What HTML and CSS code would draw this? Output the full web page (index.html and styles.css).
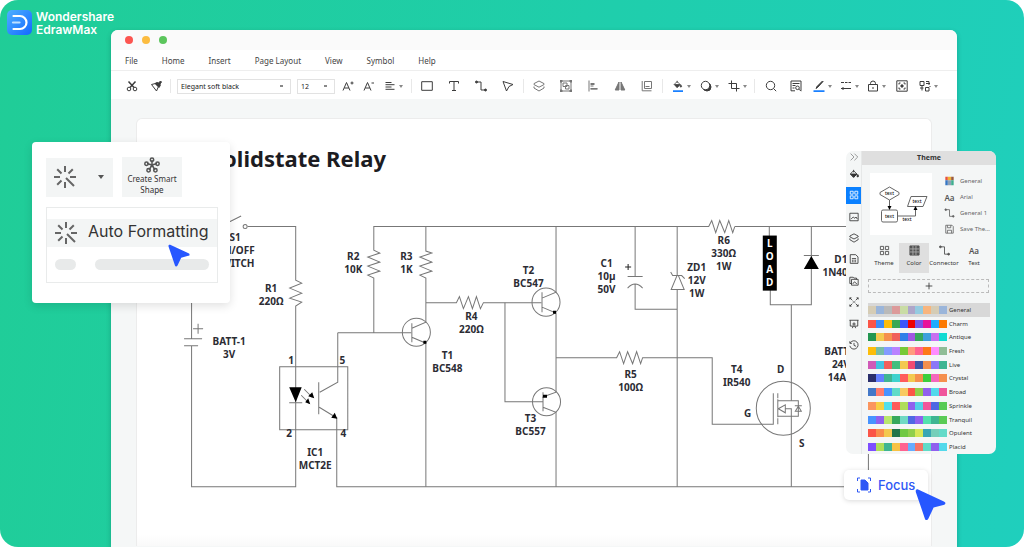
FILE: index.html
```html
<!DOCTYPE html>
<html lang="en">
<head>
<meta charset="utf-8">
<title>Wondershare EdrawMax</title>
<link rel="stylesheet" href="styles.css">
</head>
<body>
<svg class="defs" width="0" height="0" aria-hidden="true">
  <defs>
    <symbol id="burst" viewBox="0 0 24 24"><path d="M12 1v6M12 17v6M1 12h6M17 12h6M4.2 4.2l4.3 4.3M19.8 4.2l-4.3 4.3M4.2 19.8l4.3-4.3M13 13l8 8"/></symbol>
    <symbol id="layers" viewBox="0 0 12 12"><path d="M6 1l5 2.6v1L6 7.200 1 4.600v-1zM1 6.500v1.500l5 3 5-3V6.500"/></symbol>
    <symbol id="grid" viewBox="0 0 12 12"><path d="M1.500 1.500h3.500v3.500h-3.500zM7 1.500h3.500v3.500h-3.500zM1.500 7h3.500v3.500h-3.500zM7 7h3.500v3.500h-3.500z"/></symbol>
    <symbol id="bucket" viewBox="0 0 12 12"><path d="M5.500 1v3M5.500 2L1.500 6l4 4 4-4z"/><path class="solid" d="M2 6h7.500l-4 4zM10.500 6.500c1.500 2 1 3 0 3s-1.500-1 0-3z"/></symbol>
    <symbol id="elbow" viewBox="0 0 12 12"><path d="M2 2h4v8h5"/><circle class="solid" cx="1.500" cy="2" r="1"/><circle class="solid" cx="10.500" cy="10" r="1"/></symbol>
    <symbol id="pointer" viewBox="0 0 30 32"><path d="M3 1.500L28 13c2 1 2 3-.5 3.500L18 19l-5 10.500c-1 2-3 2-3.500 0L.8 4C.3 2 1.300.8 3 1.500z"/></symbol>
  </defs>
</svg>
<main class="hero">
  <div class="brand">
    <svg class="brand-mark" viewBox="0 0 25 25" aria-hidden="true">
      <defs><linearGradient id="mark" x1="0" y1="0" x2="1" y2="1"><stop offset="0" stop-color="#4fb0ff"/><stop offset="1" stop-color="#1268ff"/></linearGradient></defs>
      <rect width="25" height="25" rx="5" fill="url(#mark)"/>
      <path d="M6.500 6h6.500a6.500 6.500 0 0 1 0 13H6.500" fill="none" stroke="#fff" stroke-width="2.200" stroke-linecap="round"/>
      <path d="M6 12.500h6.500" fill="none" stroke="#bfe0ff" stroke-width="2.200" stroke-linecap="round"/>
    </svg>
    <span class="brand-name">Wondershare<br>EdrawMax</span>
  </div>

  <section class="window">
    <div class="titlebar"><i class="dot red"></i><i class="dot amber"></i><i class="dot green"></i></div>
    <nav class="menubar">
      <button>File</button><button>Home</button><button>Insert</button><button>Page Layout</button><button>View</button><button>Symbol</button><button>Help</button>
    </nav>
    <div class="toolbar">
      <div class="tools edit">
        <button aria-label="Cut"><svg viewBox="0 0 12 12"><path stroke-width="1.500" d="M2.500 1.500L8 7.500M9.500 1.500L4 7.500"/><circle cx="3" cy="9" r="1.800"/><circle cx="9" cy="9" r="1.800"/></svg></button>
        <button aria-label="Format painter"><svg viewBox="0 0 12 12"><path d="M1.500 4.500l4-1 3 3-2 4.500z"/><path class="solid" d="M5 3.500l2-1 1.500.5L10.500 1l1 1-1.500 2 .3 1.500L9 7.500z"/></svg></button>
      </div>
      <i class="sep"></i>
      <select class="font" aria-label="Font"><option>Elegant soft black</option></select>
      <select class="size" aria-label="Font size"><option>12</option></select>
      <div class="tools type">
        <button aria-label="Grow font"><svg viewBox="0 0 12 12"><path d="M1 10.500L4.500 2.500 8 10.500M2.300 8h4.500M8.500 3h3M10 1.500v3"/></svg></button>
        <button aria-label="Shrink font"><svg viewBox="0 0 12 12"><path d="M1 10.500L4.500 2.500 8 10.500M2.300 8h4.500M8.500 3h2.500"/></svg></button>
        <button class="drop" aria-label="Align text"><svg viewBox="0 0 12 12"><path d="M1.500 2.500h6M1.500 4.700h9M1.500 7h6M1.500 9.300h9"/></svg></button>
      </div>
      <i class="sep"></i>
      <div class="tools draw">
        <button aria-label="Rectangle"><svg viewBox="0 0 12 12"><path d="M.7 1.700h10.600v8.600H.7z"/></svg></button>
        <button aria-label="Text"><svg viewBox="0 0 12 12"><path d="M1.500 3.500V1.500h9v2M6 1.500v9M4 10.500h4"/></svg></button>
        <button aria-label="Connector"><svg><use href="#elbow"/></svg></button>
        <button aria-label="Select"><svg viewBox="0 0 12 12"><path d="M1 1.500l10 3-4 2-2.500 4.500z"/></svg></button>
      </div>
      <i class="sep"></i>
      <div class="tools draw muted">
        <button aria-label="Layers"><svg><use href="#layers"/></svg></button>
        <button aria-label="Group"><svg viewBox="0 0 12 12"><path d="M1 1h10v10H1zM3 3h4v3.500H3zM5.500 5.500h3.500v3.500H5.500z"/><path class="solid" d="M0 0h2v2H0zM10 0h2v2h-2zM0 10h2v2H0zM10 10h2v2h-2z"/></svg></button>
        <button aria-label="Align"><svg viewBox="0 0 12 12"><path d="M2 .5v11M3.500 3.500h4M3.500 6h3M3.500 8.500h7M3.500 4.500h4M3.500 9.200h7"/></svg></button>
        <button aria-label="Flip"><svg viewBox="0 0 12 12"><path class="solid" d="M5 2v8H1.200zM7 2v8h3.800z"/></svg></button>
        <button aria-label="Arrange"><svg viewBox="0 0 12 12"><path d="M1.200 1v9.800h9.300M3.500 1.500h7v7h-7zM4.500 6.500h4"/></svg></button>
      </div>
      <i class="sep"></i>
      <div class="tools style">
        <button class="drop" aria-label="Fill"><svg viewBox="0 0 12 12"><use href="#bucket" width="11" height="9"/><path class="accent" d="M1 11.300h10"/></svg></button>
        <button class="drop" aria-label="Shadow"><svg viewBox="0 0 12 12"><circle class="solid" cx="7" cy="7" r="4"/><circle class="hollow" cx="5.500" cy="5.500" r="4.200"/></svg></button>
        <button class="drop" aria-label="Crop"><svg viewBox="0 0 12 12"><path d="M3.500.5v8h8M.5 3.500h8v8"/></svg></button>
      </div>
      <i class="sep"></i>
      <div class="tools view">
        <button aria-label="Search"><svg viewBox="0 0 12 12"><circle cx="5.500" cy="5.500" r="4.200"/><path d="M8.500 8.500l2.700 2.700"/></svg></button>
        <button aria-label="Page preview"><svg viewBox="0 0 12 12"><path d="M5 10.800H1V1h10v9.800M2.500 3.500h7M2.500 5.500h3M2.500 8h2"/><circle cx="7.500" cy="7.800" r="1.800"/><path d="M9 9.200l2 2"/></svg></button>
        <button class="drop" aria-label="Line color"><svg viewBox="0 0 12 12"><path class="solid" d="M3 8.500l1-2L9.500 1l.5.500-5 5.500z"/><path class="accent" d="M.5 11.300h11"/></svg></button>
        <button class="drop" aria-label="Line style"><svg viewBox="0 0 12 12"><path d="M1 2.500h3M5 2.500h2.500M8.500 2.500H11M1 8.500h10M3 7v3"/></svg></button>
        <button class="drop" aria-label="Lock"><svg viewBox="0 0 12 12"><path d="M1.500 4.500h9v6.500h-9zM3.500 4.500v-1a2.500 2.500 0 0 1 5 0v1M6 7v2"/></svg></button>
        <button aria-label="Focus mode"><svg viewBox="0 0 12 12"><path d="M.8.8h10.400v10.400H.8zM3 4.500V3h1.500M7.500 3H9v1.500M9 7.500V9H7.500M4.500 9H3V7.500"/><circle class="solid" cx="6" cy="6" r="1.200"/></svg></button>
        <button class="drop" aria-label="More tools"><svg viewBox="0 0 12 12"><path d="M1 1.500h4v4H1zM3 5.500v5M1 8h3.500M7 1.500h3v3.500M7 3.500h4M6.500 7.500h3.500v3.500H6.500zM10.500 6l1 1"/></svg></button>
      </div>
    </div>

    <div class="canvas">
      <article class="sheet">
        <h1>Solidstate Relay</h1>
        <svg class="circuit" viewBox="138 190 793 356" role="img" aria-label="Solid state relay circuit">
          <g class="wire">
            <path d="M220 227l22-11M248.500 226.500H296.500V280l6 3-12 5 12 5-12 5 12 4-6 4V486.500H192.500V345.500M185 345.500h14M185 338.500h18M192.500 338.500V290M194 328.500h10M199 323.500v10"/>
            <circle cx="246" cy="226.500" r="2"/>
            <path d="M280.500 366.500h68v63h-68zM290 402.500h13M305 389l8 8M302 395l8 8M338.500 332.500v49.500l-18 10M319.500 382v32M320 407l18 11M337.500 418v68.500H868.500V226.500H735"/>
            <path d="M338.500 332.500H412M374.500 332.500V278l-6-3 12-4-12-5 12-4-12-5 12-4-6-3V226.500H709l3-6 4 12 4-12 5 12 4-12 4 12 2-6"/>
            <path d="M426.500 226.500V251l6 2-12 4 12 5-12 4 12 5-12 4 6 3V322l-14 6M412.500 337l14 6v143.500M412.500 323v19M426.500 302.500H457l3-6 4 12 5-12 4 12 4-12 4 12 3-6H542"/>
            <circle cx="417" cy="332" r="14"/><circle cx="546.500" cy="302" r="14"/><circle cx="547" cy="401.500" r="14"/>
            <path d="M556.500 226.500V292l-14 6M542.500 307l14 6v79l-14 5M542.500 292v20M505.500 302.500v99H543M543.500 392v19M543.500 407l13 5v74.500"/>
            <path d="M556.500 357.500H617l3-6 4 12 4-12 5 12 4-12 4 12 2-6H712.500v66.500H773.500V393"/>
            <path d="M635.500 226.500v50M628 276.500h15M628 288q7.500-8 15 0M635.500 284.500v24.500H677.500M677.500 226.500v48.500l-6 14.500h13l-6-14.500M677.500 289.500v197M671 272l2 3.500h9l3 3"/>
            <path d="M769.500 226.500v10M770.500 290v14.500H811.500V226.500M804 255.500h15M791.500 304.500V400.500"/>
            <circle cx="783.500" cy="408" r="27"/>
            <path d="M778 393v5M778 399v18M778 418v6M778 400.500h20.500v15.500H778M785 408.500h6.500v78M778.500 408.500l7-4v8zM795.500 411h6l-3-5zM795 405.500h7"/>
          </g>
          <g class="ink">
            <path d="M290 387h12.500L296.500 402zM315 398l-6-2 4-4zM311 404l-5-2 3-4zM338 418.500l-6-1 3.500-5zM424 340.500h3v3h-3zM553.500 310.500h3v3h-3zM543.500 394.500h4v3h-4zM804 269h15L811.500 256z"/>
            <rect x="763" y="235.500" width="14" height="55"/>
          </g>
          <path class="plus" d="M625.500 267h6M628.500 264v6"/>
          <g class="label">
            <text x="236" y="241">S1</text><text x="236" y="254">ON/OFF</text><text x="236" y="267">SWITCH</text>
            <text x="272" y="292">R1</text><text x="272" y="305">220Ω</text>
            <text x="230" y="345">BATT-1</text><text x="230" y="358">3V</text>
            <text x="292" y="364">1</text><text x="343" y="364">5</text><text x="290" y="437">2</text><text x="344" y="437">4</text>
            <text x="316" y="456">IC1</text><text x="316" y="469">MCT2E</text>
            <text x="354" y="260">R2</text><text x="354" y="273">10K</text>
            <text x="407" y="260">R3</text><text x="407" y="273">1K</text>
            <text x="472" y="320">R4</text><text x="472" y="333">220Ω</text>
            <text x="448" y="359">T1</text><text x="448" y="372">BC548</text>
            <text x="529" y="274">T2</text><text x="529" y="287">BC547</text>
            <text x="531" y="422">T3</text><text x="531" y="435">BC557</text>
            <text x="631" y="378">R5</text><text x="631" y="391">100Ω</text>
            <text x="607" y="267">C1</text><text x="607" y="280">10µ</text><text x="607" y="293">50V</text>
            <text x="697" y="271">ZD1</text><text x="697" y="284">12V</text><text x="697" y="297">1W</text>
            <text x="724" y="244">R6</text><text x="724" y="257">330Ω</text><text x="724" y="270">1W</text>
            <text x="841" y="263">D1</text><text x="841" y="276">1N4007</text>
            <text x="841" y="355">BATT-2</text><text x="841" y="368">24V</text><text x="841" y="381">14AH</text>
            <text x="737" y="373">T4</text><text x="737" y="386">IR540</text>
            <text x="781" y="373">D</text><text x="748" y="417">G</text><text x="802" y="447">S</text>
          </g>
          <g class="label light"><text x="770" y="247">L</text><text x="770" y="260">O</text><text x="770" y="273">A</text><text x="770" y="286">D</text></g>
        </svg>
      </article>
    </div>
  </section>

  <aside class="popup">
    <div class="popup-tools">
      <button class="burst-button" aria-label="Auto formatting options"><svg class="burst"><use href="#burst"/></svg><i class="caret"></i></button>
      <button class="smart-button">
        <svg viewBox="0 0 16 16" aria-hidden="true"><path d="M8 8V3M8 8L3 6.500M8 8l5-1.500M8 8l-3 5M8 8l3 5"/><circle cx="8" cy="2.700" r="1.700"/><circle cx="2.500" cy="6.800" r="1.700"/><circle cx="13.500" cy="6.800" r="1.700"/><circle cx="4.600" cy="13.200" r="1.700"/><circle cx="11.400" cy="13.200" r="1.700"/></svg>
        <span>Create Smart Shape</span>
      </button>
    </div>
    <div class="popup-menu">
      <button class="auto"><svg class="burst"><use href="#burst"/></svg><span>Auto Formatting</span></button>
      <div class="placeholder"><i class="short"></i><i class="long"></i></div>
    </div>
    <svg class="cursor small" aria-hidden="true"><use href="#pointer"/></svg>
  </aside>

  <aside class="theme">
    <div class="rail">
      <button class="collapse" aria-label="Collapse"><svg viewBox="0 0 12 12"><path d="M2 2l4 4-4 4M6.500 2l4 4-4 4"/></svg></button>
      <div class="rail-items">
        <button aria-label="Fill"><svg><use href="#bucket"/></svg></button>
        <button class="active" aria-label="Theme"><svg><use href="#grid"/></svg></button>
        <button aria-label="Image"><svg viewBox="0 0 12 12"><path d="M1 1.500h10v9H1zM2.500 8.500L5 6l2 1.500L8.500 6l1.500 2.500"/></svg></button>
        <button aria-label="Layers"><svg><use href="#layers"/></svg></button>
        <button aria-label="Notes"><svg viewBox="0 0 12 12"><path d="M1.500.8h6.500l2.800 2.700v7.700H1.500zM3.500 5.500h5M3.500 7.500h2M6.500 7.500h2M3.500 9.300h2M6.500 9.300h2"/></svg></button>
        <button aria-label="Pages"><svg viewBox="0 0 12 12"><path d="M3 9H1V1.500h4l1 1h3v1.500M3 4h8v7H3zM4.500 9.500l2-2.500 3 2.500"/></svg></button>
        <button aria-label="Fit"><svg viewBox="0 0 12 12"><path d="M1 1l3 3M11 1L8 4M1 11l3-3M11 11L8 8M4.500 6h3M1 3V1h2M9 1h2v2M1 9v2h2M9 11h2V9"/></svg></button>
        <button aria-label="Presentation"><svg viewBox="0 0 12 12"><path d="M.5 1.500h11M1.500 1.500v7h9v-7M6 4v4M4 6h4M4 11l1-2.500M8 11L7 8.500"/></svg></button>
        <button aria-label="History"><svg viewBox="0 0 12 12"><path d="M1.500 3.500A5 5 0 1 1 1 7M1 1.500v2.500h2.500M6 3.500V6.500l2.500 1"/></svg></button>
      </div>
    </div>
    <div class="theme-main">
      <h2>Theme</h2>
      <div class="theme-top">
        <svg class="preview" viewBox="0 0 62 62" role="img" aria-label="Theme preview">
          <g><path d="M19.500 14l9.500 5.500v2L19.500 27 10 21.500v-2zM41 23.500h16l-4 10H37.500z"/><rect x="11.500" y="37" width="16" height="12" rx="1.500"/><path d="M19.500 27v8M27.500 43h18v-8"/></g>
          <path d="M17.500 33h4l-2 4zM43.500 37h4l-2-4z"/>
          <text x="19.500" y="22">text</text><text x="19.500" y="45">text</text><text x="47" y="30">text</text><text x="37" y="48">text</text>
        </svg>
        <div class="presets">
          <button><svg viewBox="0 0 12 12"><path fill="#e8503f" d="M1 1h3v4H1z"/><path fill="#f2b134" d="M4 1h4v4H4z"/><path fill="#9a5a3c" d="M8 1h3v4H8z"/><path fill="#3576c4" d="M1 5h3v6H1z"/><path fill="#8fa0b5" d="M4 5h4v6H4z"/><path fill="#3fae8f" d="M8 5h3v6H8z"/></svg>General</button>
          <button><b>Aa</b>Arial</button>
          <button><svg class="line"><use href="#elbow"/></svg>General 1</button>
          <button><svg class="line" viewBox="0 0 12 12"><path d="M1.500 1.500h7.500l1.500 1.500v8h-9zM3.500 1.500v3h4v-3M3.500 11V7.500h5V11"/></svg>Save The...</button>
        </div>
      </div>
      <div class="tabs">
        <button><svg class="line"><use href="#grid"/></svg>Theme</button>
        <button class="active"><svg class="line" viewBox="0 0 12 12"><path class="solid" d="M1 1h10v10H1z"/><path stroke="#aaa" d="M1 4.300h10M1 7.600h10M4.300 1v10M7.600 1v10"/></svg>Color</button>
        <button><svg class="line"><use href="#elbow"/></svg>Connector</button>
        <button><b>Aa</b>Text</button>
      </div>
      <button class="add" aria-label="Add color scheme"><svg viewBox="0 0 12 12"><path d="M6 2v8M2 6h8"/></svg></button>
      <div class="schemes" id="schemes"></div>
    </div>
  </aside>

  <button class="focus">
    <svg viewBox="0 0 16 18" aria-hidden="true"><path d="M1.500 5V2H4M12 2h2.500v3M1.500 13v3H4M12 16h2.500v-3"/><path class="page" d="M5 4h4l3 3v7H5z"/></svg>Focus
  </button>
  <svg class="cursor large" aria-hidden="true"><use href="#pointer"/></svg>
</main>
<script src="script.js"></script>
</body>
</html>
```
FILE: styles.css
```css
* { box-sizing: border-box; }
body { margin: 0; background: #fff; font-family: "Noto Sans", sans-serif; color: #333; }
button { margin: 0; padding: 0; border: 0; background: none; color: inherit; font: inherit; }
svg { display: block; }
.defs { position: absolute; }
.solid { fill: currentColor; }

.hero {
  position: relative;
  height: 100vh;
  min-height: 547px;
  padding: 30px 67px 0 111px;
  overflow: hidden;
  border-radius: 18px;
  background: linear-gradient(100deg, #20cd97, #1fceac 55%, #1fcfbd);
}
.brand { position: absolute; left: 7px; top: 10px; display: flex; align-items: flex-start; gap: 4px; color: #fff; }
.brand-mark { width: 25px; height: 25px; }
.brand-name { font: 600 12px/13px Inter, sans-serif; }

.window {
  display: flex;
  flex-direction: column;
  height: 100%;
  overflow: hidden;
  border-radius: 7px 7px 0 0;
  background: #fff;
  box-shadow: 0 2px 5px rgba(0, 70, 60, .3);
}
.titlebar { display: flex; align-items: center; gap: 9px; height: 20px; padding: 0 14px; background: #fafafa; }
.dot { width: 8px; height: 8px; border-radius: 50%; }
.red { background: #fc5550; }
.amber { background: #fcbc40; }
.green { background: #5bc55c; }
.menubar { display: flex; gap: 24px; height: 21px; padding: 0 14px; border-bottom: 1px solid #eee; font-size: 8px; color: #444; }

.toolbar { display: flex; align-items: center; height: 28px; padding: 2px 14px 0; color: #3c3c3c; }
.tools { display: flex; align-items: center; }
.tools button { position: relative; width: 14px; height: 14px; padding: 1px; }
.tools .drop { width: 20px; }
.tools .drop::after {
  content: "";
  position: absolute;
  right: 0;
  top: 6px;
  border: 2px solid transparent;
  border-top: 3px solid #888;
  border-bottom: 0;
}
.tools svg { width: 12px; height: 12px; }
.tools svg, .rail svg, .line, .add svg { fill: none; stroke: currentColor; stroke-width: 1; }
.tools .accent { stroke: #1a80ff; stroke-width: 2; }
.tools .hollow { fill: #fff; }
.edit { gap: 10px; }
.type { gap: 7px; padding: 0 1px 0 6px; }
.draw { gap: 13px; padding: 0 1px; }
.muted { color: #777; }
.style { gap: 8px; padding-left: 1px; }
.view { gap: 7px; }
.view button:not(.drop) { margin: 0 2px; }
.sep { width: 1px; height: 14px; margin: 0 7px; background: #e8e8e8; }
.toolbar select {
  height: 15px;
  padding: 0 3px;
  border: 1px solid #e2e2e2;
  border-radius: 0;
  appearance: none;
  background: #fff linear-gradient(#888, #888) right 7px center / 3px 2px no-repeat;
  color: #222;
  font: 7px "Noto Sans", sans-serif;
}
.toolbar .font { width: 114px; margin: 0 6px 0 -1px; }
.toolbar .size { width: 38px; }

.canvas { flex: 1; min-height: 0; padding: 19px 25px 0; background: #f5f7f7; }
.sheet { border: 1px solid #ececec; border-bottom: 0; border-radius: 6px 6px 0 0; background: linear-gradient(#fff, #fff 415px, #f8f8f8 430px); }
.sheet h1 { margin: 0; padding: 22px 74px 15px; font-size: 22px; line-height: 34px; color: #1c1c22; }
.circuit { width: 100%; }
.wire { fill: none; stroke: #777; stroke-width: 1; }
.ink { fill: #000; }
.plus { stroke: #222; stroke-width: 1; }
.label { fill: #2c2c34; font-size: 10px; font-weight: 700; text-anchor: middle; }
.light { fill: #fff; }

.popup {
  position: absolute;
  left: 32px;
  top: 142px;
  width: 198px;
  padding: 15px 12px 20px 14px;
  border-radius: 4px;
  background: #fff;
  box-shadow: 0 3px 10px rgba(0, 0, 0, .12);
}
.popup-tools { display: flex; align-items: center; gap: 9px; margin-bottom: 10px; }
.burst { width: 24px; height: 24px; fill: none; stroke: #666; stroke-width: 2; }
.burst-button { display: flex; align-items: center; justify-content: space-between; width: 67px; height: 39px; padding: 0 9px 0 7px; background: #f3f5f5; }
.caret { border: 3px solid transparent; border-top: 4px solid #555; border-bottom: 0; }
.smart-button { display: flex; flex-direction: column; align-items: center; width: 60px; height: 40px; padding: 0 2px; background: #f3f5f5; font-size: 8px; line-height: 11px; }
.smart-button svg { width: 16px; height: 16px; fill: none; stroke: #555; stroke-width: 1.5; }
.popup-menu { padding: 11px 0; border: 1px solid #e9ebeb; }
.auto { display: flex; align-items: center; gap: 10px; width: 100%; height: 28px; padding-left: 7px; background: #f3f5f5; font: 16px Inter, sans-serif; white-space: nowrap; }
.auto span { padding-bottom: 4px; }
.placeholder { display: flex; gap: 19px; padding: 12px 8px 1px; }
.placeholder i { height: 11px; border-radius: 6px; background: #e8eaea; }
.short { width: 21px; }
.long { flex: 1; }
.cursor { position: absolute; fill: #2757ff; }
.small { left: 136px; top: 101px; width: 22px; height: 25px; }
.large { right: 78px; bottom: 26px; width: 31px; height: 33px; }

.theme {
  position: absolute;
  right: 28px;
  top: 151px;
  display: flex;
  width: 150px;
  height: 303px;
  overflow: hidden;
  border-radius: 7px;
  background: #f4f6f6;
  font-size: 6px;
}
.rail { flex: none; width: 16px; border-right: 1px solid #e6e8e8; }
.rail button { display: flex; align-items: center; justify-content: center; width: 15px; }
.rail svg { width: 10px; height: 10px; }
.collapse { height: 12px; color: #888; }
.rail-items { display: grid; grid-auto-rows: 1fr; align-items: center; height: 193px; }
.rail-items button { height: 17px; }
.rail-items .active { background: #0a80ff; color: #fff; }
.theme-main { flex: 1; min-width: 0; }
.theme h2 { margin: 0; background: #dfdfdf; font-size: 7px; line-height: 14px; text-align: center; }
.theme-top { display: flex; gap: 12px; padding: 8px 8px 0; }
.preview { flex: none; width: 62px; height: 62px; background: #fff; }
.preview g { fill: none; stroke: #666; stroke-width: 1; }
.preview text { font-size: 5px; text-anchor: middle; }
.presets { display: grid; grid-auto-rows: 16px; white-space: nowrap; color: #666; }
.presets button { display: flex; align-items: center; gap: 5px; }
.presets svg { width: 11px; height: 10px; }
.presets b, .tabs b { width: 11px; font-size: 8px; font-weight: 600; line-height: 11px; text-align: center; color: #555; }
.tabs { display: grid; grid-template-columns: repeat(4, 30px); padding: 6px 7px; }
.tabs button { display: flex; flex-direction: column; align-items: center; gap: 3px; height: 30px; padding-top: 2px; line-height: 8px; }
.tabs .active { background: #dfdfdf; }
.tabs svg { width: 11px; height: 11px; color: #555; }
.add { display: flex; align-items: center; justify-content: center; width: 121px; height: 14px; margin: 0 6px 10px; border: 1px dashed #bbb; }
.add svg { width: 10px; height: 10px; }
.schemes { display: grid; grid-auto-rows: 1fr; height: 151px; margin: 0 6px; }
.scheme { display: flex; align-items: center; gap: 2px; }
.scheme:first-child { background: #d8d8d8; }
.swatches { display: flex; width: 79px; height: 8px; }
.swatches i { flex: 1; }

.focus {
  position: absolute;
  right: 96px;
  bottom: 47px;
  display: flex;
  align-items: center;
  gap: 6px;
  width: 84px;
  height: 30px;
  padding-left: 12px;
  border-radius: 5px;
  background: #fff;
  box-shadow: 0 1px 5px rgba(0, 0, 0, .15);
  color: #2f58f5;
  font: 500 13px Inter, sans-serif;
}
.focus svg { width: 16px; height: 18px; fill: none; stroke: currentColor; stroke-width: 1; }
.focus .page { fill: currentColor; }
```
FILE: script.js
```js
const schemes = {
  General: "#d5ccb5 #9ab5da #b9b9b9 #dc9a9a #c9dca4 #aea6c9 #95cbe0 #f8b57e #d5ccb5 #9ab5da",
  Charm: "#fb5547 #3e8cf5 #fcbd0a #36a854 #3c55fb #ef0000 #7a55e5 #e8149a #20abff #fd7900",
  Antique: "#229650 #f3c94f #f58f4d #f05f5b #2f7fe8 #a057e2 #36a85b #3da0db #c76ff0 #12dbd2",
  Fresh: "#fcbd0a #77bda7 #839bff #b982ff #76c936 #ff9b7d #ff6390 #fd7917 #ff8cff #90bd96",
  Live: "#d05ab8 #43c3e0 #f05f5b #42be7d #f3c94f #f04b72 #4056a6 #f58f4d #8b77f7 #3eb592",
  Crystal: "#2b2f6b #627fff #3eb592 #3fd2ce #ff5b5b #f3c94f #f58f4d #3ccf3c #f565bd #f58f4d",
  Broad: "#4378c8 #ff7c6d #4793ff #60dbc8 #f8c961 #fa5548 #90cf4c #9060ee #53d9eb #f0559b",
  Sprinkle: "#fb955e #f8cf43 #53dfec #ff5a5a #afdd59 #9060ee #53cfe7 #f0559b #4e68e3 #59cb55",
  Tranquil: "#4793ff #9060ee #bae76d #36a85b #70d9c3 #4e68e3 #9060ee #53e1ad #3eb592 #59cb55",
  Opulent: "#fb5547 #f98e4d #f3c94f #217549 #70c943 #90cf4c #d7e758 #39a6b3 #75cfb9 #65dbc9",
  Placid: "#7e4eff #afdd59 #3eb592 #f8c243 #ff6390 #66acff #f57467 #60dbc8 #9060ee #53d9eb"
};
const list = document.getElementById("schemes");
for (const [name, colors] of Object.entries(schemes)) {
  const row = document.createElement("button");
  row.className = "scheme";
  const swatches = document.createElement("span");
  swatches.className = "swatches";
  for (const color of colors.split(" ")) {
    const cell = document.createElement("i");
    cell.style.background = color;
    swatches.append(cell);
  }
  row.append(swatches, name);
  list.append(row);
}
```
